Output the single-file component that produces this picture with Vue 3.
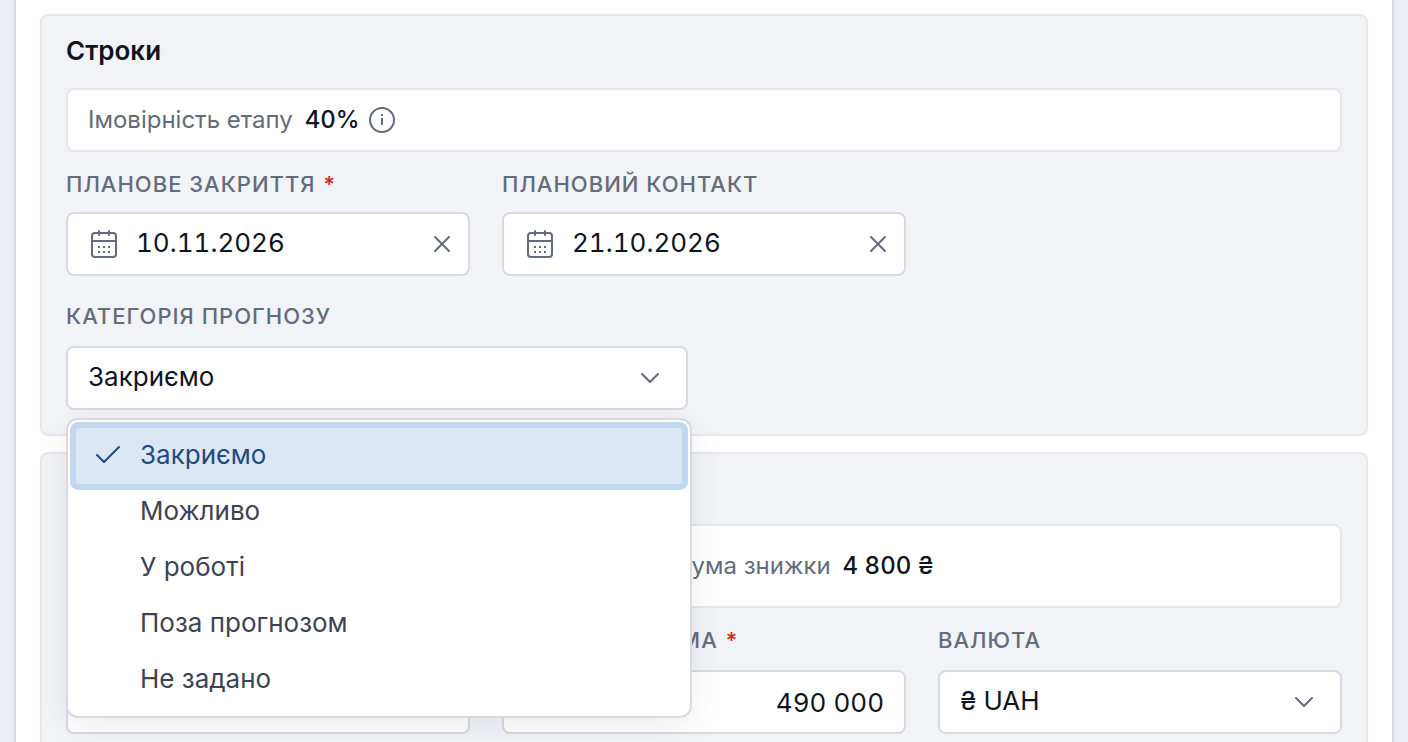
<template>
  <main class="page">
    <form class="sheet" @submit.prevent>
      <section class="card">
        <h2 class="card-title">Строки</h2>

        <p class="summary">
          <span>Імовірність етапу</span>
          <strong>{{ probability }}%</strong>
          <button type="button" class="icon-button" aria-label="Довідка">
            <svg class="info" width="28" height="28" viewBox="0 0 28 28">
              <circle cx="14" cy="14" r="12" />
              <path d="M14 12v7M14 8v2" />
            </svg>
          </button>
        </p>

        <div class="row">
          <div v-for="d in dates" :key="d.id" class="field field-date">
            <label :for="d.id">{{ d.label }} <span v-if="d.required" class="required">*</span></label>
            <div class="control">
              <svg class="calendar" width="28" height="30" viewBox="0 0 28 30">
                <rect x="2" y="4" width="24" height="24" rx="3" />
                <path d="M2 12h24M9 2v4M19 2v4" />
                <path class="dots" d="M8 18h2M13 18h2M18 18h2M8 23h2M13 23h2M18 23h2" />
              </svg>
              <input :id="d.id" v-model="d.value" type="text" />
              <button type="button" class="icon-button" aria-label="Очистити" @click="d.value = ''">
                <svg class="clear" width="20" height="20" viewBox="0 0 20 20"><path d="M3 3l14 14M17 3L3 17" /></svg>
              </button>
            </div>
          </div>
        </div>

        <div class="row row-half">
          <div class="field">
            <label for="category">Категорія прогнозу</label>
            <div class="control">
              <select id="category" v-model="category" @mousedown.prevent="open = !open">
                <option v-for="o in options" :key="o">{{ o }}</option>
              </select>
              <svg class="chevron" width="20" height="12" viewBox="0 0 20 12"><path d="M2 2l8 8l8 -8" /></svg>
              <ul v-if="open" class="menu" role="listbox" aria-label="Категорія прогнозу">
                <li
                  v-for="o in options"
                  :key="o"
                  class="option"
                  :class="{ selected: o === category }"
                  role="option"
                  :aria-selected="o === category"
                  @click="pick(o)"
                >
                  <svg class="check" width="24" height="18" viewBox="0 0 24 18">
                    <path v-if="o === category" d="M1 10l7 7L23 2" />
                  </svg>
                  {{ o }}
                </li>
              </ul>
            </div>
          </div>
        </div>
      </section>

      <section class="card card-amount">
        <p class="summary summary-tall">
          <span>Сума знижки</span>
          <strong>4 800 ₴</strong>
        </p>

        <div class="row">
          <div class="field">
            <div class="control">
              <input v-model="discount" type="text" aria-label="Знижка" />
            </div>
          </div>
          <div class="field">
            <label for="amount">Очікувана сума <span class="required">*</span></label>
            <div class="control">
              <input id="amount" v-model="amount" class="number" type="text" />
            </div>
          </div>
          <div class="field">
            <label for="currency">Валюта</label>
            <div class="control">
              <select id="currency" v-model="currency">
                <option>₴ UAH</option>
              </select>
              <svg class="chevron" width="20" height="12" viewBox="0 0 20 12"><path d="M2 2l8 8l8 -8" /></svg>
            </div>
          </div>
        </div>
      </section>
    </form>
  </main>
</template>

<script setup>
import { ref } from 'vue'

const probability = 40
const options = ['Закриємо', 'Можливо', 'У роботі', 'Поза прогнозом', 'Не задано']

const category = ref('Закриємо')
const open = ref(true)
const discount = ref('')
const amount = ref('490 000')
const currency = ref('₴ UAH')

const dates = ref([
  { id: 'close-date', label: 'Планове закриття', value: '10.11.2026', required: true },
  { id: 'contact-date', label: 'Плановий контакт', value: '21.10.2026', required: false },
])

function pick(value) {
  category.value = value
  open.value = false
}
</script>

<style>
html,
body {
  height: 100%;
}

body {
  margin: 0;
  background: #ebeef3;
}

#app {
  height: 100%;
}
</style>

<style scoped>
* {
  box-sizing: border-box;
}

.page {
  height: 100%;
  padding: 0 14px;
  overflow: hidden;
  font-family: Inter, "Noto Sans", sans-serif;
  font-size: 26px;
  color: #10141f;
}

.sheet {
  padding: 14px 24px 24px;
  display: flex;
  flex-direction: column;
  gap: 16px;
  background: #fff;
  border: solid #d7dae1;
  border-width: 0 2px;
}

.card {
  padding: 16px 24px 24px;
  display: flex;
  flex-direction: column;
  background: #f1f3f7;
  border: 2px solid #e5e7ec;
  border-radius: 8px;
}

.card-amount {
  padding-top: 70px;
}

.card-title {
  margin: 0 0 18px;
  font-size: 26px;
  line-height: 38px;
  font-weight: 600;
}

.summary {
  height: 64px;
  margin: 0 0 16px;
  padding: 0 20px;
  display: flex;
  align-items: center;
  background: #fff;
  border: 2px solid #e5e7ec;
  border-radius: 8px;
  font-size: 24px;
  color: #646b7a;
}

.summary span,
.summary strong {
  padding-bottom: 2px;
}

.summary strong {
  margin: 0 8px 0 12px;
  font-weight: 500;
  color: #10141f;
  font-variant-numeric: tabular-nums;
}

.summary-tall {
  height: 84px;
  padding-left: 606px;
}

.row {
  display: grid;
  grid-template-columns: repeat(3, 1fr);
  align-items: end;
  gap: 32px;
}

.row-half {
  margin-top: 24px;
  grid-template-columns: repeat(2, 1fr);
}

.field {
  min-width: 0;
  display: flex;
  flex-direction: column;
  gap: 14px;
}

.field-date {
  gap: 12px;
}

label {
  font-size: 22px;
  line-height: 32px;
  font-weight: 500;
  letter-spacing: 1px;
  text-transform: uppercase;
  color: #646b7a;
}

.required {
  margin-left: 1px;
  color: #d42020;
}

.control {
  position: relative;
  height: 64px;
  padding: 0 20px;
  display: flex;
  align-items: center;
  background: #fff;
  border: 2px solid #d7dae1;
  border-radius: 8px;
}

input,
select {
  flex: 1;
  min-width: 0;
  height: 100%;
  padding: 0 0 4px;
  border: 0;
  outline: 0;
  background: transparent;
  color: inherit;
  font: inherit;
  font-variant-numeric: tabular-nums;
  appearance: none;
}

.field-date .control {
  padding: 0 16px 0 22px;
  gap: 18px;
}

.number {
  padding: 0;
  text-align: right;
}

.icon-button {
  padding: 0;
  display: flex;
  border: 0;
  background: none;
  cursor: pointer;
}

svg {
  flex: none;
  fill: none;
  stroke: #646b7a;
  stroke-width: 2;
  stroke-linecap: round;
  stroke-linejoin: round;
}

.info path,
.dots {
  stroke-linecap: butt;
}

.chevron {
  position: absolute;
  right: 26px;
  pointer-events: none;
}

.menu {
  position: absolute;
  z-index: 10;
  top: calc(100% + 10px);
  left: -2px;
  width: calc(100% + 8px);
  margin: 0;
  padding: 8px;
  list-style: none;
  background: #fff;
  border: 2px solid #d7dae1;
  border-radius: 12px;
  box-shadow: 0 8px 32px rgba(20, 28, 50, 0.08);
}

.option {
  height: 56px;
  padding: 0 20px 4px;
  display: flex;
  align-items: center;
  gap: 20px;
  color: #3d4354;
  cursor: pointer;
}

.option.selected {
  background: #dbe7f5;
  border-radius: 3px;
  box-shadow: 0 0 0 6px #c1d7ee;
  color: #234a80;
}

.check {
  stroke: #234a80;
}
</style>
